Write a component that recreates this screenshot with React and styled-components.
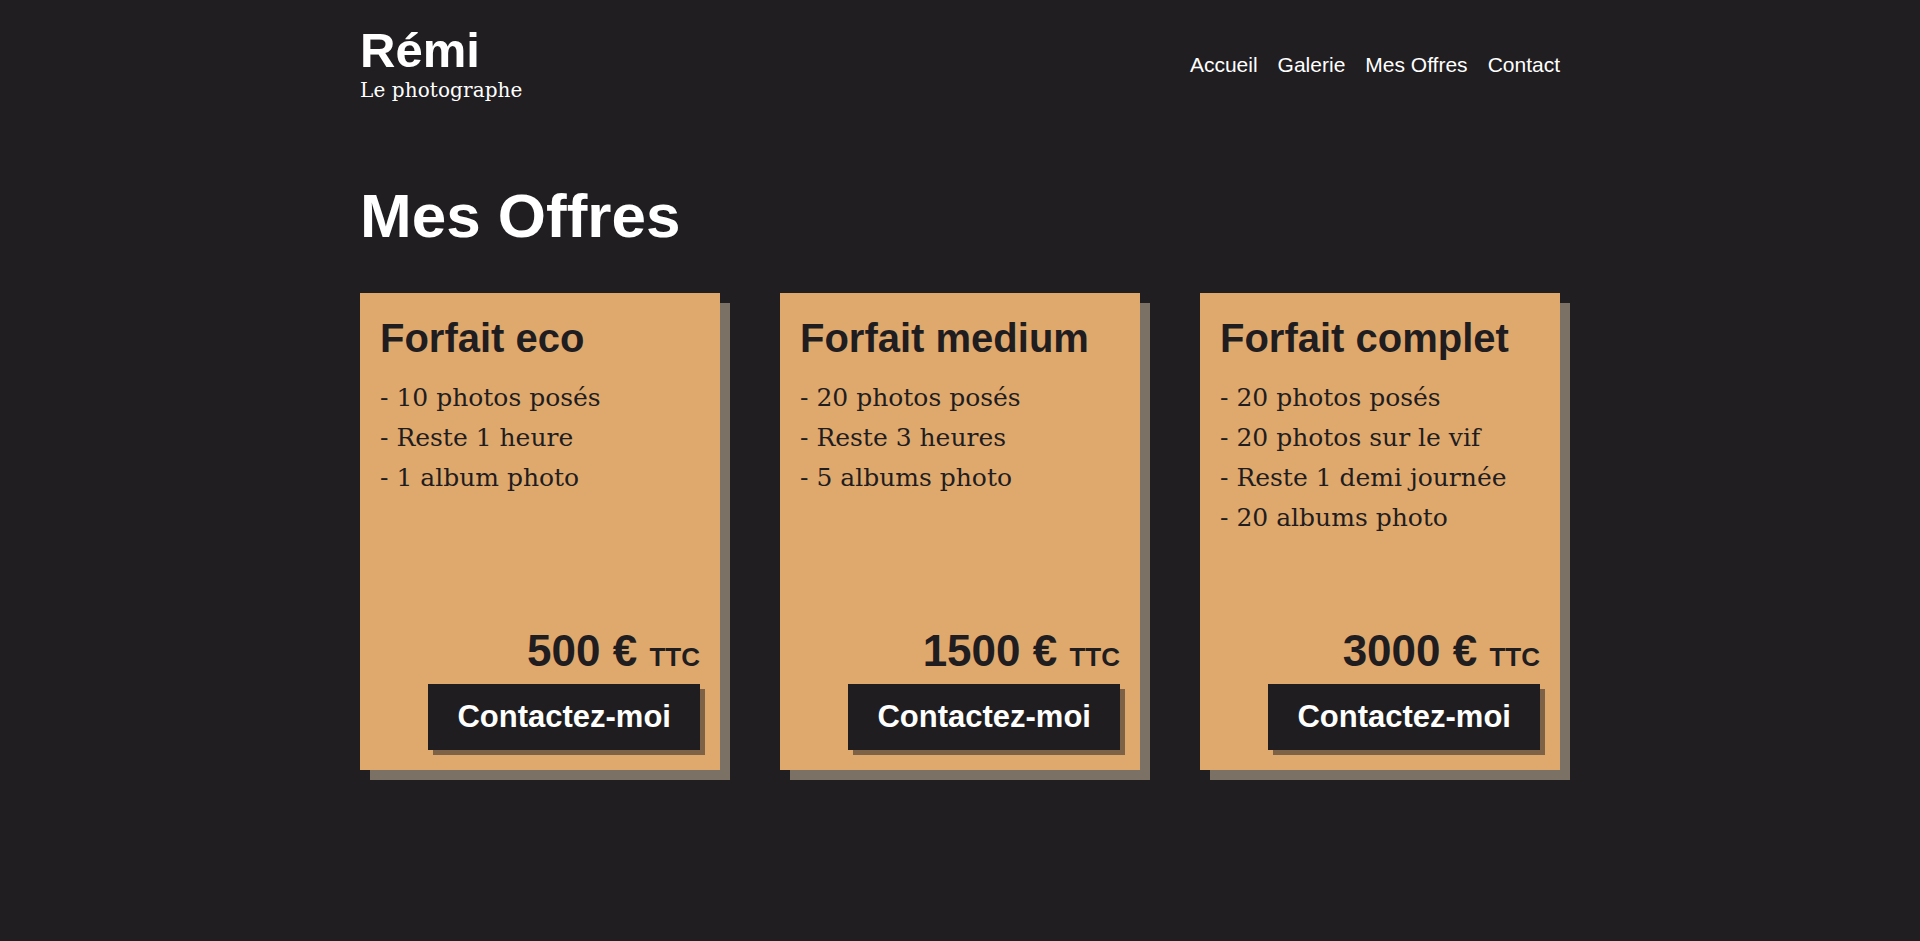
import React from 'react';
import styled, { createGlobalStyle } from 'styled-components';

const GlobalStyle = createGlobalStyle`
  html, body {
    margin: 0;
    padding: 0;
    background: #201e21;
    min-height: 100%;
  }
  body {
    font-family: "Liberation Sans", Arial, sans-serif;
    color: #ffffff;
  }
`

const Page = styled.div`
  width: 1200px;
  margin: 0 auto;
  min-height: 941px;
`

const Header = styled.header`
  display: flex;
  justify-content: space-between;
  align-items: flex-start;
  padding-top: 26px;
`

const Brand = styled.div`
  display: flex;
  flex-direction: column;
`

const BrandName = styled.h1`
  margin: 0;
  font-size: 49px;
  line-height: 48px;
  font-weight: 700;
  color: #ffffff;
`

const BrandSub = styled.span`
  margin-top: 4px;
  font-family: "DejaVu Serif", "Liberation Serif", serif;
  font-size: 20px;
  line-height: 24px;
  letter-spacing: 0.1px;
`

const Nav = styled.nav`
  display: flex;
  gap: 20px;
  margin-top: 27px;
`

const NavLink = styled.a`
  color: #ffffff;
  text-decoration: none;
  font-size: 21px;
  line-height: 24px;
  cursor: pointer;
`

const Title = styled.h2`
  margin: 83px 0 0;
  font-size: 62px;
  line-height: 61px;
  font-weight: 700;
`

const Offers = styled.div`
  display: grid;
  grid-template-columns: repeat(3, 360px);
  gap: 60px;
  margin-top: 47px;
`

const Card = styled.div`
  display: flex;
  flex-direction: column;
  height: 477px;
  box-sizing: border-box;
  padding: 20px;
  background: #dfa96e;
  color: #1f1d20;
  box-shadow: 10px 10px 0 #7c7165;
`

const CardTitle = styled.h3`
  margin: 0;
  font-size: 40px;
  line-height: 50px;
  font-weight: 700;
`

const Features = styled.ul`
  list-style: none;
  margin: 15px 0 0;
  padding: 0;
  flex: 1;
`

const Feature = styled.li`
  font-family: "DejaVu Serif", "Liberation Serif", serif;
  font-size: 25px;
  line-height: 40px;
`

const Price = styled.div`
  align-self: flex-end;
  margin-bottom: 12px;
  font-size: 44px;
  line-height: 42px;
  font-weight: 700;
`

const Tax = styled.span`
  font-size: 26px;
  line-height: 24px;
`

const ContactButton = styled.button`
  align-self: flex-end;
  height: 66px;
  padding: 0 29px;
  border: none;
  background: #1f1d20;
  color: #ffffff;
  font-family: "Liberation Sans", Arial, sans-serif;
  font-size: 31px;
  line-height: 66px;
  font-weight: 700;
  box-shadow: 5px 5px 0 #7d6247;
  cursor: pointer;
`

let offers = [
  {name: 'Forfait eco', price: '500', items: ['10 photos posés', 'Reste 1 heure', '1 album photo']},
  {name: 'Forfait medium', price: '1500', items: ['20 photos posés', 'Reste 3 heures', '5 albums photo']},
  {name: 'Forfait complet', price: '3000', items: ['20 photos posés', '20 photos sur le vif', 'Reste 1 demi journée', '20 albums photo']},
]

export default function App() {
  return (
    <>
      <GlobalStyle />
      <Page>
        <Header>
          <Brand>
            <BrandName>Rémi</BrandName>
            <BrandSub>Le photographe</BrandSub>
          </Brand>
          <Nav>
            <NavLink>Accueil</NavLink>
            <NavLink>Galerie</NavLink>
            <NavLink>Mes Offres</NavLink>
            <NavLink>Contact</NavLink>
          </Nav>
        </Header>

        <Title>Mes Offres</Title>

        <Offers>
          {offers.map((offer) => (
            <Card key={offer.name}>
              <CardTitle>{offer.name}</CardTitle>
              <Features>
                {offer.items.map((item) => (
                  <Feature key={item}>- {item}</Feature>
                ))}
              </Features>
              <Price>{offer.price} € <Tax>TTC</Tax></Price>
              <ContactButton>Contactez-moi</ContactButton>
            </Card>
          ))}
        </Offers>
      </Page>
    </>
  )
}
